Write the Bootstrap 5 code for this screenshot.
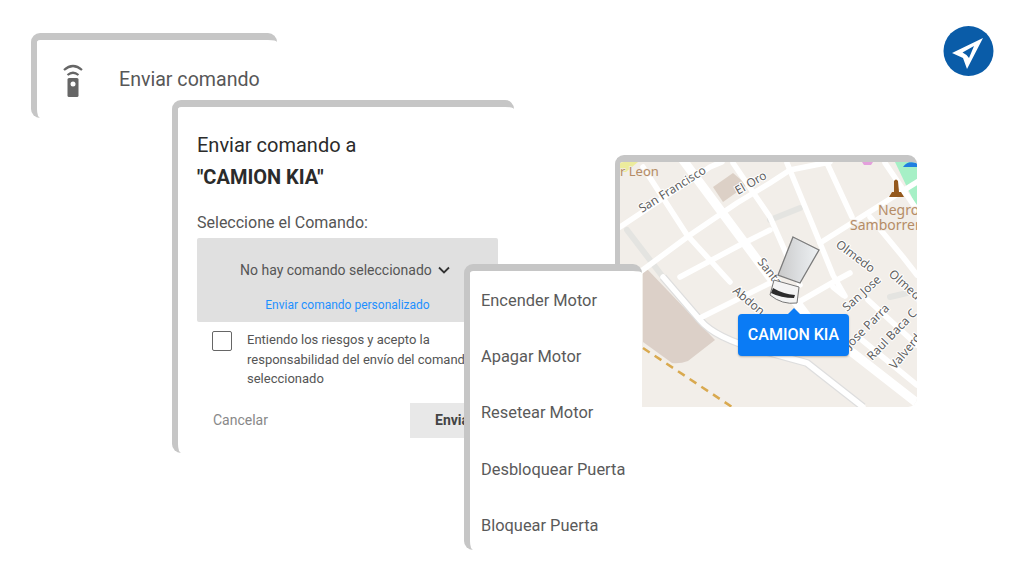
<!DOCTYPE html>
<html lang="es">
<head>
  <meta charset="UTF-8" />
  <meta name="viewport" content="width=device-width, initial-scale=1" />
  <title>Enviar comando</title>
  <link href="https://cdn.jsdelivr.net/npm/bootstrap@5.3.3/dist/css/bootstrap.min.css" rel="stylesheet" />
  <style>
    body {
      width: 1024px;
      height: 576px;
      overflow: hidden;
      background: #fff;
      font-family: Roboto, "Liberation Sans", sans-serif;
      color: #555;
    }
    .ventana {
      position: absolute;
      background: #fff;
      background-clip: padding-box;
      border-top: 7px solid #c6c6c6;
      border-left: 6px solid #c6c6c6;
      border-radius: 9px;
    }
    .v-accion { left: 31px; top: 33px; width: 246px; height: 85px; z-index: 1; }
    .v-envio { left: 172px; top: 100px; width: 342px; height: 353px; z-index: 2; padding: 22px 16px 0 19px; }
    .v-mapa { left: 615px; top: 155px; width: 302px; height: 252px; z-index: 3; border-left-width: 5px; overflow: hidden; }
    .v-menu { left: 464px; top: 264px; width: 178px; height: 286px; z-index: 4; }
    .accion-fila { height: 80px; padding-left: 25px; gap: 35px; }
    .accion-texto { font-size: 19.6px; color: #575757; }
    .titulo-envio { font-size: 20px; font-weight: 400; color: #2b2b2b; line-height: 32px; margin: 0; }
    .titulo-envio b { font-size: 20px; font-weight: 700; }
    .etiqueta { font-size: 16px; margin: 18px 0 3px; line-height: 24px; }
    .caja-comando { width: 301px; height: 84px; background: #e0e0e0; border-radius: 2px; padding-top: 22px; }
    .caja-fila { font-size: 14px; line-height: 20px; gap: 6px; padding-left: 43px; }
    .enlace-propio { display: block; font-size: 12px; color: #1e90ff; text-align: center; margin-top: 17px; line-height: 16px; text-decoration: none; }
    .acepto { padding: 8px 0 0 15px; gap: 15px; }
    .acepto .form-check-input { width: 20px; height: 20px; margin: 1px 0 0; flex: none; border: 1.5px solid #666; border-radius: 2px; }
    .acepto-texto { font-size: 13px; line-height: 19.5px; white-space: nowrap; }
    .pie-envio { margin-top: 14px; padding-left: 16px; }
    .btn-cancelar { font-size: 14px; color: #888; padding: 0; border: 0; }
    .btn-enviar { width: 88px; height: 35px; font-size: 14px; font-weight: 700; color: #444; background: #e8e8e8; border: 0; border-radius: 0; text-align: left; padding: 0 0 0 25px; }
    .menu-lista .list-group-item { border: 0; background: transparent; color: #5a5a5a; font-size: 16.4px; height: 56.2px; line-height: 56.2px; padding: 0 0 0 11px; white-space: nowrap; }
    .v-menu .menu-lista { padding-top: 2px; }
    .mapa-svg { display: block; width: 297px; height: 245px; }
    .via { fill: none; stroke: #fff; stroke-width: 5.5; stroke-linecap: round; stroke-linejoin: round; }
    .via-ancha { stroke-width: 9; }
    .via-gris { fill: none; stroke: #e4e4e1; stroke-width: 6; stroke-linecap: round; stroke-linejoin: round; }
    .via-borde { fill: none; stroke: #dedede; stroke-width: 8; stroke-linejoin: round; }
    .calle { font-family: "Noto Sans", sans-serif; font-size: 12px; fill: #5f5f5f; stroke: #fff; stroke-width: 2px; paint-order: stroke; }
    .lugar { font-family: "Noto Sans", sans-serif; font-size: 14px; fill: #b58c66; stroke: #f2eee9; stroke-width: 1.5px; paint-order: stroke; }
    .lugar-chico { font-size: 13px; }
    .globo { position: absolute; left: 118px; top: 152px; width: 111px; height: 42px; background: #0a7bf5; border-radius: 4px; color: #fff; font-size: 16px; font-weight: 500; box-shadow: 0 1px 2px rgba(0,0,0,.25); }
    .globo::before { content: ""; position: absolute; left: 50%; top: -6px; margin-left: -6px; border: 6px solid transparent; border-top: 0; border-bottom-color: #0a7bf5; }
    .logo-nav { position: absolute; left: 943px; top: 26px; }
  </style>
</head>
<body>

  <div class="ventana v-accion">
    <div class="d-flex align-items-center accion-fila">
      <svg width="22" height="36" viewBox="0 0 22 36">
        <path d="M2 8 Q11 0 20 8" fill="none" stroke="#666" stroke-width="2.200" />
        <path d="M5.500 13 Q11 8.500 16.500 13" fill="none" stroke="#666" stroke-width="2.200" />
        <rect x="5.500" y="16" width="11" height="19" rx="1.500" fill="#666" />
        <circle cx="11" cy="22" r="2.500" fill="#fff" />
      </svg>
      <span class="accion-texto">Enviar comando</span>
    </div>
  </div>

  <div class="ventana v-envio">
    <h5 class="titulo-envio">Enviar comando a<br /><b>"CAMION KIA"</b></h5>
    <p class="etiqueta">Seleccione el Comando:</p>
    <div class="caja-comando">
      <div class="d-flex align-items-center caja-fila">
        <span>No hay comando seleccionado</span>
        <svg width="12" height="8" viewBox="0 0 12 8"><path d="M1 1.500 L6 6.500 L11 1.500" fill="none" stroke="#333" stroke-width="1.800" /></svg>
      </div>
      <a class="enlace-propio" href="#">Enviar comando personalizado</a>
    </div>
    <div class="d-flex acepto">
      <input class="form-check-input" type="checkbox" />
      <div class="acepto-texto">Entiendo los riesgos y acepto la<br />responsabilidad del envío del comando<br />seleccionado</div>
    </div>
    <div class="d-flex justify-content-between align-items-center pie-envio">
      <button class="btn btn-cancelar" type="button">Cancelar</button>
      <button class="btn btn-enviar" type="button">Enviar</button>
    </div>
  </div>

  <div class="ventana v-mapa">
    <svg class="mapa-svg" viewBox="620 162 297 245">
      <defs>
        <linearGradient id="caja-camion" x1="0" y1="0" x2="1" y2="0">
          <stop offset="0" stop-color="#c9c9c9" />
          <stop offset=".5" stop-color="#dcdee0" />
          <stop offset="1" stop-color="#eef1f3" />
        </linearGradient>
      </defs>
      <rect x="620" y="162" width="297" height="245" fill="#f2eee9" />
      <path d="M620 162 H638 L626 172 H620 Z" fill="#ecec9c" />
      <path d="M895 162 H917 V208 Z" fill="#a6f0c6" />
      <path d="M903 167 Q908 160 917 163 V167 Z" fill="#1f7fe0" />
      <path d="M862 162 H873 L871 165 H864 Z" fill="#e4a0dc" />
      <path d="M713 187 L733 173 L747 185 L723 202 Z" fill="#dcd0c6" />
      <path d="M643 270 H648 L715 340 L688 361 Q680 364 672 363 L643 342 Z" fill="#dcd0c8" />
      <path d="M643 348 L732 407" fill="none" stroke="#d9a94f" stroke-width="2.500" stroke-dasharray="8 6" />

      <path class="via-gris" d="M627 230 L663 277" />
      <path class="via-gris" d="M770 220 L800 208" />
      <path class="via-gris" d="M890 297 L907 293" />
      <path class="via-borde" d="M663 277 L700 320 Q715 338 760 350 L807 363 L863 407" />
      <path class="via" d="M663 277 L700 320 Q715 338 760 350 L807 363 L863 407" />
      <path class="via" d="M643 167 L687 235 L730 282" />
      <path class="via" d="M733 163 L770 217 L800 285" />
      <path class="via" d="M787 163 L820 243 L833 275 L845 296" />
      <path class="via" d="M827 163 L852 217" />
      <path class="via" d="M885 163 L917 210" />
      <path class="via" d="M870 217 L903 257 L917 275" />
      <path class="via" d="M620 227 L710 167 L722 162" />
      <path class="via" d="M640 272 L690 235 L737 203 L770 183 L790 170 L830 162" />
      <path class="via" d="M680 277 L740 245 L770 230" />
      <path class="via" d="M700 318 L770 283" />
      <path class="via" d="M797 303 L837 280 L850 273" />
      <path class="via" d="M820 243 L893 197 L917 182" />
      <path class="via" d="M833 287 L843 295" />
      <path class="via" d="M862 340 L917 385" />
      <path class="via" d="M868 300 L917 345" />
      <path class="via via-ancha" d="M683 160 L770 277 L797 303 L817 330 L853 353 L917 403" />

      <text class="calle" transform="translate(642 213) rotate(-32)">San Francisco</text>
      <text class="calle" transform="translate(738 195) rotate(-30)">El Oro</text>
      <text class="calle" transform="translate(835 246) rotate(37)">Olmedo</text>
      <text class="calle" transform="translate(888 275) rotate(42)">Olmedo</text>
      <text class="calle" transform="translate(757 262) rotate(52)">Santa</text>
      <text class="calle" transform="translate(732 292) rotate(40)">Abdon</text>
      <text class="calle" transform="translate(847 312) rotate(-42)">San Jose</text>
      <text class="calle" transform="translate(850 349) rotate(-45)">Jose Parra</text>
      <text class="calle" transform="translate(872 361) rotate(-46)">Raul Baca C</text>
      <text class="calle" transform="translate(895 370) rotate(-50)">Valverd</text>
      <text class="lugar lugar-chico" x="620" y="176">r Leon</text>
      <text class="lugar" x="878" y="215">Negro</text>
      <text class="lugar" x="850" y="230">Samborren</text>
      <path d="M894 181 Q896 178 898 181 L899 192 H901 L904 197 H889 L892 192 H894 Z" fill="#94581c" />

      <path d="M793 237 L819 250 L800 283 L778 275 Z" fill="url(#caja-camion)" stroke="#7b7b7b" stroke-width="1.300" />
      <path d="M774 280 L799 287 L797 303 Q782 305 770 295 Z" fill="#f4f4f4" stroke="#777" stroke-width="1" />
      <path d="M773 288 Q783 294 795 295 L794 298 Q781 298 771 293 Z" fill="#2c2c2c" />
    </svg>
    <div class="globo d-flex align-items-center justify-content-center">CAMION KIA</div>
  </div>

  <div class="ventana v-menu">
    <ul class="list-group menu-lista">
      <li class="list-group-item">Encender Motor</li>
      <li class="list-group-item">Apagar Motor</li>
      <li class="list-group-item">Resetear Motor</li>
      <li class="list-group-item">Desbloquear Puerta</li>
      <li class="list-group-item">Bloquear Puerta</li>
    </ul>
  </div>

  <svg class="logo-nav" width="51" height="51" viewBox="943 26 51 51">
    <circle cx="968.500" cy="51" r="25" fill="#0a5ca8" />
    <path fill-rule="evenodd" fill="#fff" d="M983 38 L952 53 L963 58 L967 69 Z M974 46 L962.500 52.500 L966.500 55 L969 58 Z" />
  </svg>

  <script src="https://cdn.jsdelivr.net/npm/bootstrap@5.3.3/dist/js/bootstrap.bundle.min.js"></script>
</body>
</html>
